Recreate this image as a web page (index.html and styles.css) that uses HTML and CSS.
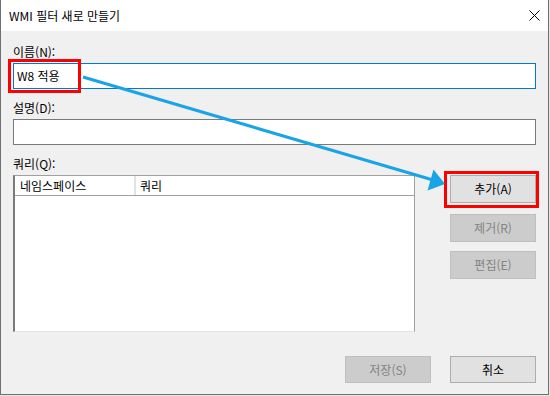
FILE: index.html
```html
<!DOCTYPE html>
<html lang="ko">
<head>
    <meta charset="UTF-8">
    <title>WMI 필터 새로 만들기</title>
    <link rel="stylesheet" href="styles.css">
</head>
<body>
    <div class="window">
        <div class="titlebar">
            <span class="title">WMI 필터 새로 만들기</span>
            <svg class="close" width="11" height="11" viewBox="0 0 11 11">
                <path d="M0.5 0.5 L10.5 10.5 M10.5 0.5 L0.5 10.5" stroke="#000" stroke-width="1" fill="none"/>
            </svg>
        </div>

        <div class="content">
            <label class="field-label">이름(N):</label>
            <div class="textbox focused">W8 적용</div>

            <label class="field-label">설명(D):</label>
            <div class="textbox"></div>

            <label class="field-label">쿼리(Q):</label>
            <div class="query-row">
                <div class="listview">
                    <div class="list-header">
                        <div class="col col-ns">네임스페이스</div>
                        <div class="col col-query">쿼리</div>
                    </div>
                </div>
                <div class="side-buttons">
                    <button class="btn">추가(A)</button>
                    <button class="btn disabled btn-remove">제거(R)</button>
                    <button class="btn disabled btn-edit">편집(E)</button>
                </div>
            </div>

            <div class="footer">
                <button class="btn disabled">저장(S)</button>
                <button class="btn">취소</button>
            </div>
        </div>
    </div>

    <!-- 주석 표시 (빨간 상자, 파란 화살표) -->
    <svg class="annotations" width="550" height="396" viewBox="0 0 550 396">
        <rect x="9.5" y="60.5" width="70" height="31" fill="none" stroke="#ff0000" stroke-width="3"/>
        <rect x="445.5" y="172.5" width="92" height="34" fill="none" stroke="#ff0000" stroke-width="3"/>
        <line x1="83" y1="77" x2="433" y2="180" stroke="#19a4e6" stroke-width="3"/>
        <polygon points="445,184 427.5,190.5 433.5,169.5" fill="#19a4e6"/>
    </svg>
</body>
</html>
```

FILE: styles.css
```css
body {
    margin: 0;
    background: #e6e6e6;
    font-family: "Noto Sans CJK KR", "Noto Sans", sans-serif;
    font-size: 12px;
    color: #000;
}
.window {
    width: 549px;
    height: 395px;
    box-sizing: border-box;
    border: 1px solid #707070;
    border-top: none;
    background: #f0f0f0;
    display: flex;
    flex-direction: column;
}
.titlebar {
    height: 31px;
    flex-shrink: 0;
    background: #fff;
    display: flex;
    align-items: center;
    justify-content: space-between;
    padding: 0 8px 0 8px;
}
.title {
    line-height: 15px;
}
.close {
    display: block;
}
.content {
    flex: 1;
    display: flex;
    flex-direction: column;
    padding: 13px 12px 0 12px;
}
.field-label {
    line-height: 15px;
    height: 15px;
    margin-bottom: 4px;
}
.field-label + .textbox {
    margin-bottom: 11px;
}
.textbox {
    height: 26px;
    box-sizing: border-box;
    border: 1px solid #7a7a7a;
    background: #fff;
    padding: 0 3px;
    line-height: 24px;
}
.textbox.focused {
    border-color: #0078d7;
}
.query-row {
    display: flex;
    justify-content: space-between;
}
.listview {
    width: 402px;
    height: 157px;
    box-sizing: border-box;
    background: #fff;
    border-top: 1px solid #a0a0a0;
    border-left: 2px solid #7a7a7a;
    border-right: 1px solid #a0a0a0;
    border-bottom: 1px solid #e3e3e3;
}
.list-header {
    display: flex;
    height: 20px;
    box-sizing: border-box;
    border-bottom: 1px solid #a0a0a0;
    line-height: 19px;
}
.col {
    padding-left: 5px;
}
.col-ns {
    width: 114px;
    border-right: 2px solid #e3e3e3;
}
.col-query {
    padding-left: 4px;
}
.side-buttons {
    width: 86px;
    display: flex;
    flex-direction: column;
}
.btn {
    width: 86px;
    height: 28px;
    box-sizing: border-box;
    background: #e1e1e1;
    border: 1px solid #adadad;
    font-family: inherit;
    font-size: 12px;
    color: #000;
    padding: 0;
    line-height: 26px;
}
.btn.disabled {
    background: #cccccc;
    border-color: #bfbfbf;
    color: #838383;
}
.btn-remove {
    margin-top: 11px;
}
.btn-edit {
    margin-top: 9px;
}
.footer {
    display: flex;
    justify-content: flex-end;
    gap: 19px;
    margin-top: 24px;
}
.footer .btn {
    height: 27px;
    line-height: 25px;
}
.annotations {
    position: absolute;
    top: 0;
    left: 0;
    pointer-events: none;
}
```
